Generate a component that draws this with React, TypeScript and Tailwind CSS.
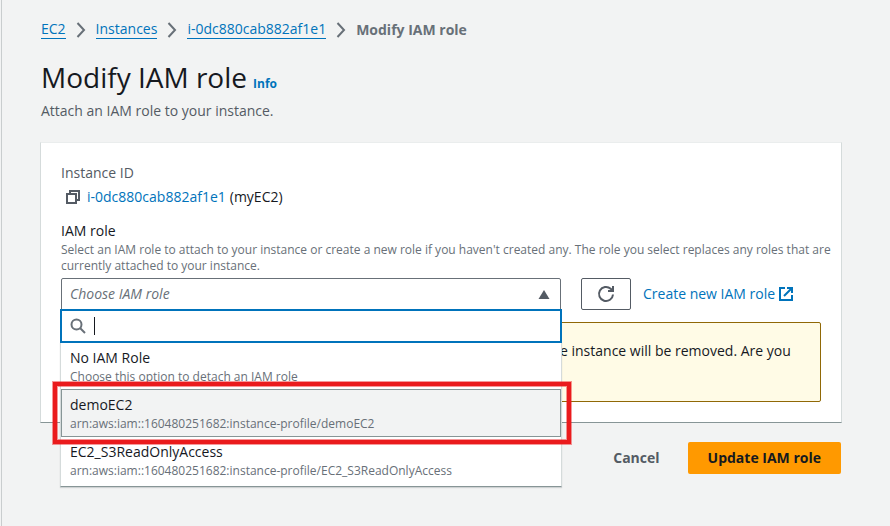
import { useState } from "react";

type Role = { name: string; detail: string };

const roles: Role[] = [
  { name: "No IAM Role", detail: "Choose this option to detach an IAM role" },
  { name: "demoEC2", detail: "arn:aws:iam::160480251682:instance-profile/demoEC2" },
  { name: "EC2_S3ReadOnlyAccess", detail: "arn:aws:iam::160480251682:instance-profile/EC2_S3ReadOnlyAccess" },
];

function Chevron() {
  return (
    <svg width="10" height="16" viewBox="0 0 10 16" fill="none" stroke="#687078" strokeWidth="2" aria-hidden="true">
      <path d="M1.500 1 8 8l-6.500 7" />
    </svg>
  );
}

function CopyIcon() {
  return (
    <svg width="16" height="16" viewBox="0 0 16 16" fill="none" stroke="#545b64" strokeWidth="2" aria-hidden="true">
      <path d="M2 5h9v9H2z" />
      <path d="M5 5V2h9v9h-3" />
    </svg>
  );
}

function SearchIcon() {
  return (
    <svg width="16" height="16" viewBox="0 0 16 16" fill="none" stroke="#687078" strokeWidth="2" aria-hidden="true">
      <circle cx="6.500" cy="6.500" r="5" />
      <path d="m10 10 5 5" />
    </svg>
  );
}

function RefreshIcon() {
  return (
    <svg width="18" height="18" viewBox="0 0 18 18" fill="none" stroke="#545b64" strokeWidth="2" aria-hidden="true">
      <path d="M16 9.500a7 7 0 1 1-2.300-5.700L16 6" />
      <path d="M16 1v5h-5" />
    </svg>
  );
}

function ExternalIcon() {
  return (
    <svg width="16" height="16" viewBox="0 0 16 16" fill="none" stroke="#0073bb" strokeWidth="2" aria-hidden="true">
      <path d="M7 2H2v12h12V9" />
      <path d="M9 2h5v5M14 2 6 10" />
    </svg>
  );
}

function Breadcrumbs() {
  const link = "border-b border-[#0073bb] text-[#0073bb]";
  return (
    <nav aria-label="Breadcrumbs">
      <ol className="flex items-center gap-[10px] leading-[18px]">
        <li className="flex"><a href="#ec2" className={link}>EC2</a></li>
        <li aria-hidden="true"><Chevron /></li>
        <li className="flex"><a href="#instances" className={link}>Instances</a></li>
        <li aria-hidden="true"><Chevron /></li>
        <li className="flex"><a href="#instance" className={link}>i-0dc880cab882af1e1</a></li>
        <li aria-hidden="true"><Chevron /></li>
        <li className="font-bold text-[#687078]">Modify IAM role</li>
      </ol>
    </nav>
  );
}

function RoleSelect() {
  const [query, setQuery] = useState("");
  const [active, setActive] = useState("demoEC2");
  return (
    <div className="relative w-[500px]">
      <button
        type="button"
        id="role"
        aria-haspopup="listbox"
        aria-expanded="true"
        className="flex h-8 w-full items-center justify-between rounded-t-xs border border-[#687078] bg-white pr-[10px] pl-2 text-[#687078] italic"
      >
        Choose IAM role
        <svg width="12" height="9" viewBox="0 0 12 9" fill="#545b64" aria-hidden="true">
          <path d="M6 0 11.500 9H.5z" />
        </svg>
      </button>
      <div className="absolute top-[31px] -right-px -left-px z-10">
        <div className="relative z-10 flex h-[34px] items-center gap-2 border-2 border-[#0073bb] bg-white px-2">
          <SearchIcon />
          <input
            autoFocus
            aria-label="Filter IAM roles"
            value={query}
            onChange={(e) => setQuery(e.target.value)}
            className="h-[18px] min-w-0 flex-1 border-l border-[#16191f] bg-transparent caret-transparent outline-none"
          />
        </div>
        <ul
          role="listbox"
          aria-label="IAM roles"
          className="-mt-px border-x border-b border-x-[#d5dbdb] border-b-[#879596] bg-white pb-[2px] shadow-[0_1px_1px_0_rgba(0,28,36,0.15)]"
        >
          {roles
            .filter((r) => r.name.toLowerCase().includes(query.toLowerCase()))
            .map((r) => (
              <li
                key={r.name}
                role="option"
                aria-selected={r.name === active}
                onClick={() => setActive(r.name)}
                className={
                  r.name === active
                    ? "relative -mt-px border border-[#879596] bg-[#f2f3f3] px-2 py-1 first:mt-0"
                    : "-mt-px border border-transparent px-2 py-1 first:mt-0"
                }
              >
                <div className="leading-[22px] text-[#16191f]">{r.name}</div>
                <div className="text-xs leading-4 text-[#687078]">{r.detail}</div>
                {r.name === active && (
                  <span className="pointer-events-none absolute -top-2 -right-[11px] -bottom-2 -left-[9px] border-4 border-[#ea1b1d] shadow-[0_0_0_1px_rgba(234,27,29,0.45),inset_0_0_0_1px_rgba(234,27,29,0.45)]" />
                )}
              </li>
            ))}
        </ul>
      </div>
    </div>
  );
}

export default function App() {
  return (
    <div className="min-h-screen bg-[#f2f3f3] pl-px font-['Open_Sans','Noto_Sans',sans-serif] text-sm text-[#16191f]">
      <main className="min-h-screen border-l border-[#c9cdce] pt-5 pr-[49px] pl-[39px]">
        <Breadcrumbs />
        <header className="mt-5">
          <h1 className="flex items-baseline gap-[6px] text-[28px] leading-9">
            Modify IAM role
            <a href="#info" className="text-xs font-bold text-[#0073bb]">Info</a>
          </h1>
          <p className="mt-[5px] leading-[22px] text-[#545b64]">Attach an IAM role to your instance.</p>
        </header>

        <section className="-mx-px mt-5 border-x border-t border-b border-x-[#d5dbdb] border-t-[#eaeded] border-b-[#879596] bg-white px-5 pt-[19px] pb-5 leading-[22px]">
          <div className="text-[#545b64]">Instance ID</div>
          <div className="mt-[2px] flex items-center">
            <button type="button" aria-label="Copy instance ID" className="mr-[6px] ml-1"><CopyIcon /></button>
            <a href="#instance" className="mr-1 text-[#0073bb]">i-0dc880cab882af1e1</a>
            (myEC2)
          </div>
          <label htmlFor="role" className="mt-3 block">IAM role</label>
          <p className="-mr-5 text-xs leading-4 text-[#687078]">
            Select an IAM role to attach to your instance or create a new role if you haven't created any. The role you select replaces any roles that are currently attached to your instance.
          </p>
          <div className="mt-1 flex items-center">
            <RoleSelect />
            <button type="button" aria-label="Refresh roles" className="mr-3 ml-5 flex h-8 w-[50px] items-center justify-center rounded-xs border border-[#545b64]">
              <RefreshIcon />
            </button>
            <a href="#create" className="flex items-center gap-[3px] text-[#0073bb]">Create new IAM role <ExternalIcon /></a>
          </div>
          <div role="alert" className="mt-3 min-h-20 rounded-xs border border-[#906806] bg-[#fffbe6] py-[17px] pl-[498px]">
            e instance will be removed. Are you
          </div>
        </section>

        <footer className="mt-[19px] flex justify-end gap-2 font-bold">
          <button type="button" className="h-8 px-5 text-[#545b64]">Cancel</button>
          <button type="button" className="h-8 rounded-xs bg-[#ff9900] px-5 text-[#16191f]">Update IAM role</button>
        </footer>
      </main>
    </div>
  );
}
